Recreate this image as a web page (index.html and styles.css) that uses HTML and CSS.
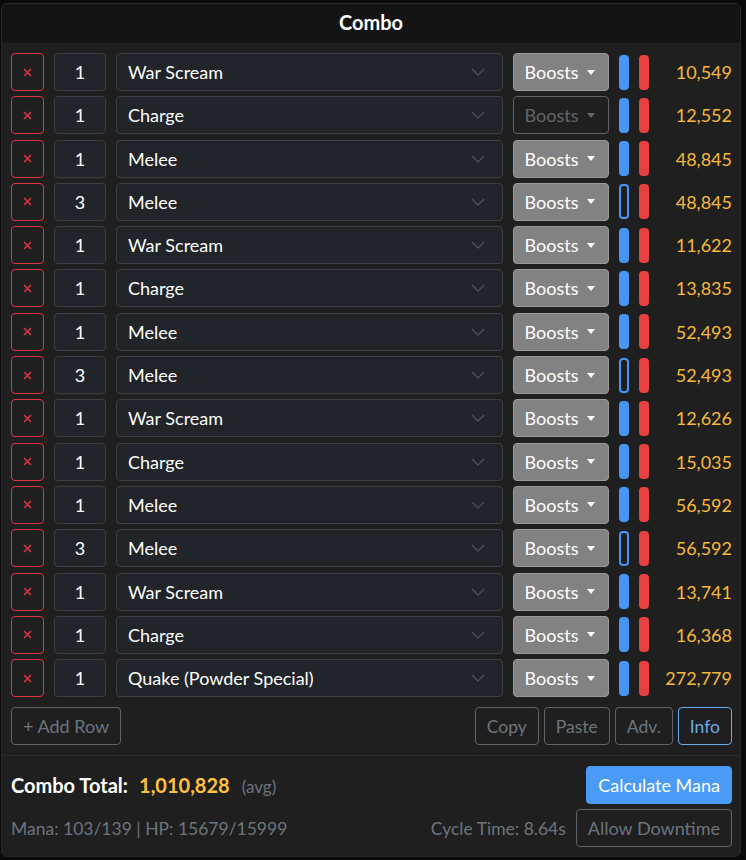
FILE: index.html
```html
<!DOCTYPE html>
<html lang="en">
<head>
    <meta charset="UTF-8">
    <meta name="viewport" content="width=device-width, initial-scale=1.0">
    <title>Combo</title>
    <link rel="stylesheet" href="styles.css">
</head>
<body>

<div class="card">
    <div class="card-header">Combo</div>

    <div class="card-body">
        <div class="combo-rows" id="comboRows"></div>

        <div class="row-actions">
            <button class="btn-outline">+ Add Row</button>
            <div class="action-group">
                <button class="btn-outline">Copy</button>
                <button class="btn-outline">Paste</button>
                <button class="btn-outline">Adv.</button>
                <button class="btn-outline btn-info">Info</button>
            </div>
        </div>
    </div>

    <div class="card-footer">
        <div class="footer-line">
            <div class="total">
                <span class="total-label">Combo Total:</span>
                <span class="total-value">1,010,828</span>
                <span class="total-note">(avg)</span>
            </div>
            <button class="btn-primary">Calculate Mana</button>
        </div>
        <div class="footer-line">
            <span class="muted">Mana: 103/139 | HP: 15679/15999</span>
            <div class="cycle">
                <span class="muted">Cycle Time: 8.64s</span>
                <button class="btn-outline">Allow Downtime</button>
            </div>
        </div>
    </div>
</div>

<script>
    const rows = [
        ["1", "War Scream", "10,549", true, true],
        ["1", "Charge", "12,552", true, false],
        ["1", "Melee", "48,845", true, true],
        ["3", "Melee", "48,845", false, true],
        ["1", "War Scream", "11,622", true, true],
        ["1", "Charge", "13,835", true, true],
        ["1", "Melee", "52,493", true, true],
        ["3", "Melee", "52,493", false, true],
        ["1", "War Scream", "12,626", true, true],
        ["1", "Charge", "15,035", true, true],
        ["1", "Melee", "56,592", true, true],
        ["3", "Melee", "56,592", false, true],
        ["1", "War Scream", "13,741", true, true],
        ["1", "Charge", "16,368", true, true],
        ["1", "Quake (Powder Special)", "272,779", true, true]
    ];

    const list = document.getElementById("comboRows");
    rows.forEach(([qty, spell, dmg, crit, boosts]) => {
        const row = document.createElement("div");
        row.className = "combo-row";
        row.innerHTML = `
            <button class="btn-del">
                <svg width="9" height="9" viewBox="0 0 9 9"><path d="M1 1L8 8M8 1L1 8" stroke="#dc3545" stroke-width="1.5"/></svg>
            </button>
            <div class="qty">${qty}</div>
            <div class="spell-select">
                <span>${spell}</span>
                <svg width="14" height="8" viewBox="0 0 14 8"><path d="M1 1L7 7L13 1" fill="none" stroke="#4a4f55" stroke-width="1.4"/></svg>
            </div>
            <button class="btn-boosts${boosts ? "" : " disabled"}">Boosts <span class="caret"></span></button>
            <span class="bar bar-blue${crit ? "" : " off"}"></span>
            <span class="bar bar-red"></span>
            <span class="dmg">${dmg}</span>
        `;
        list.appendChild(row);
    });
</script>

</body>
</html>
```

FILE: styles.css
```css
body {
    font-family: 'Lato', sans-serif;
    margin: 0;
    padding: 3px 0 0 1px;
    background-color: #0a0a0a;
    color: #fff;
}

button {
    font-family: inherit;
    cursor: pointer;
}

.card {
    width: 740px;
    height: 854px;
    box-sizing: border-box;
    background-color: #1f1f1f;
    border: 1px solid #262626;
    border-radius: 6px;
    overflow: hidden;
}

.card-header {
    background-color: #141414;
    height: 39px;
    line-height: 37px;
    text-align: center;
    font-size: 20px;
    font-weight: 700;
}

.card-body {
    padding: 10px 8px 10px 9px;
    border-bottom: 1px solid #2a2a2a;
}

.combo-rows {
    display: flex;
    flex-direction: column;
    gap: 5.3px;
}

.combo-row {
    display: flex;
    align-items: center;
    gap: 10px;
    height: 38px;
}

.btn-del {
    width: 33px;
    height: 38px;
    box-sizing: border-box;
    background: transparent;
    border: 1px solid #dc3545;
    border-radius: 4px;
    display: flex;
    align-items: center;
    justify-content: center;
    padding: 0;
}

.qty {
    width: 52px;
    height: 38px;
    box-sizing: border-box;
    background-color: #212429;
    border: 1px solid #3b3f44;
    border-radius: 4px;
    text-align: center;
    line-height: 36px;
    font-size: 18px;
}

.spell-select {
    width: 387px;
    height: 38px;
    box-sizing: border-box;
    background-color: #212429;
    border: 1px solid #3b3f44;
    border-radius: 4px;
    display: flex;
    align-items: center;
    justify-content: space-between;
    padding: 0 17px 0 11px;
    font-size: 18px;
}

.btn-boosts {
    width: 96px;
    height: 38px;
    box-sizing: border-box;
    background-color: #828282;
    border: 1px solid #9a9a9a;
    border-radius: 4px;
    color: #fff;
    font-size: 18px;
    padding: 0 2px 0 0;
    display: flex;
    align-items: center;
    justify-content: center;
    gap: 4px;
}

.btn-boosts.disabled {
    background-color: transparent;
    border-color: #5c6166;
    color: #62676c;
}

.caret {
    width: 0;
    height: 0;
    border-left: 4px solid transparent;
    border-right: 4px solid transparent;
    border-top: 5px solid #fff;
    margin-left: 5px;
}

.btn-boosts.disabled .caret {
    border-top-color: #62676c;
}

.bar {
    width: 10px;
    height: 35px;
    box-sizing: border-box;
    border-radius: 4px;
}

.bar-blue {
    background-color: #4795f5;
}

.bar-blue.off {
    background-color: transparent;
    border: 2px solid #4795f5;
}

.bar-red {
    background-color: #e83f3f;
}

.dmg {
    flex: 1;
    text-align: right;
    color: #f6b93b;
    font-size: 18px;
}

.row-actions {
    display: flex;
    justify-content: space-between;
    margin-top: 10px;
}

.action-group {
    display: flex;
    gap: 5px;
}

.btn-outline {
    height: 38px;
    background: transparent;
    border: 1px solid #5c636a;
    border-radius: 4px;
    color: #6c757d;
    font-size: 18px;
    padding: 0 11px;
}

.action-group .btn-outline {
    font-size: 17.5px;
    padding: 0 11px;
}

.btn-info {
    border-color: #6aaae8;
    color: #6aaae8;
}

.card-footer {
    padding: 10px 8px 0 9px;
    display: flex;
    flex-direction: column;
    gap: 5px;
}

.footer-line {
    display: flex;
    justify-content: space-between;
    align-items: center;
}

.total-label {
    font-size: 20px;
    font-weight: 700;
    margin-right: 7px;
}

.total-value {
    font-size: 20px;
    font-weight: 700;
    color: #ffc240;
    margin-right: 8px;
}

.total-note {
    font-size: 17px;
    color: #6c757d;
}

.btn-primary {
    height: 38px;
    background-color: #4a9bf5;
    border: 1px solid #4a9bf5;
    border-radius: 4px;
    color: #fff;
    font-size: 18px;
    padding: 0 11px;
}

.muted {
    color: #6c757d;
    font-size: 17.5px;
}

.cycle {
    display: flex;
    align-items: center;
    gap: 10px;
}
```
